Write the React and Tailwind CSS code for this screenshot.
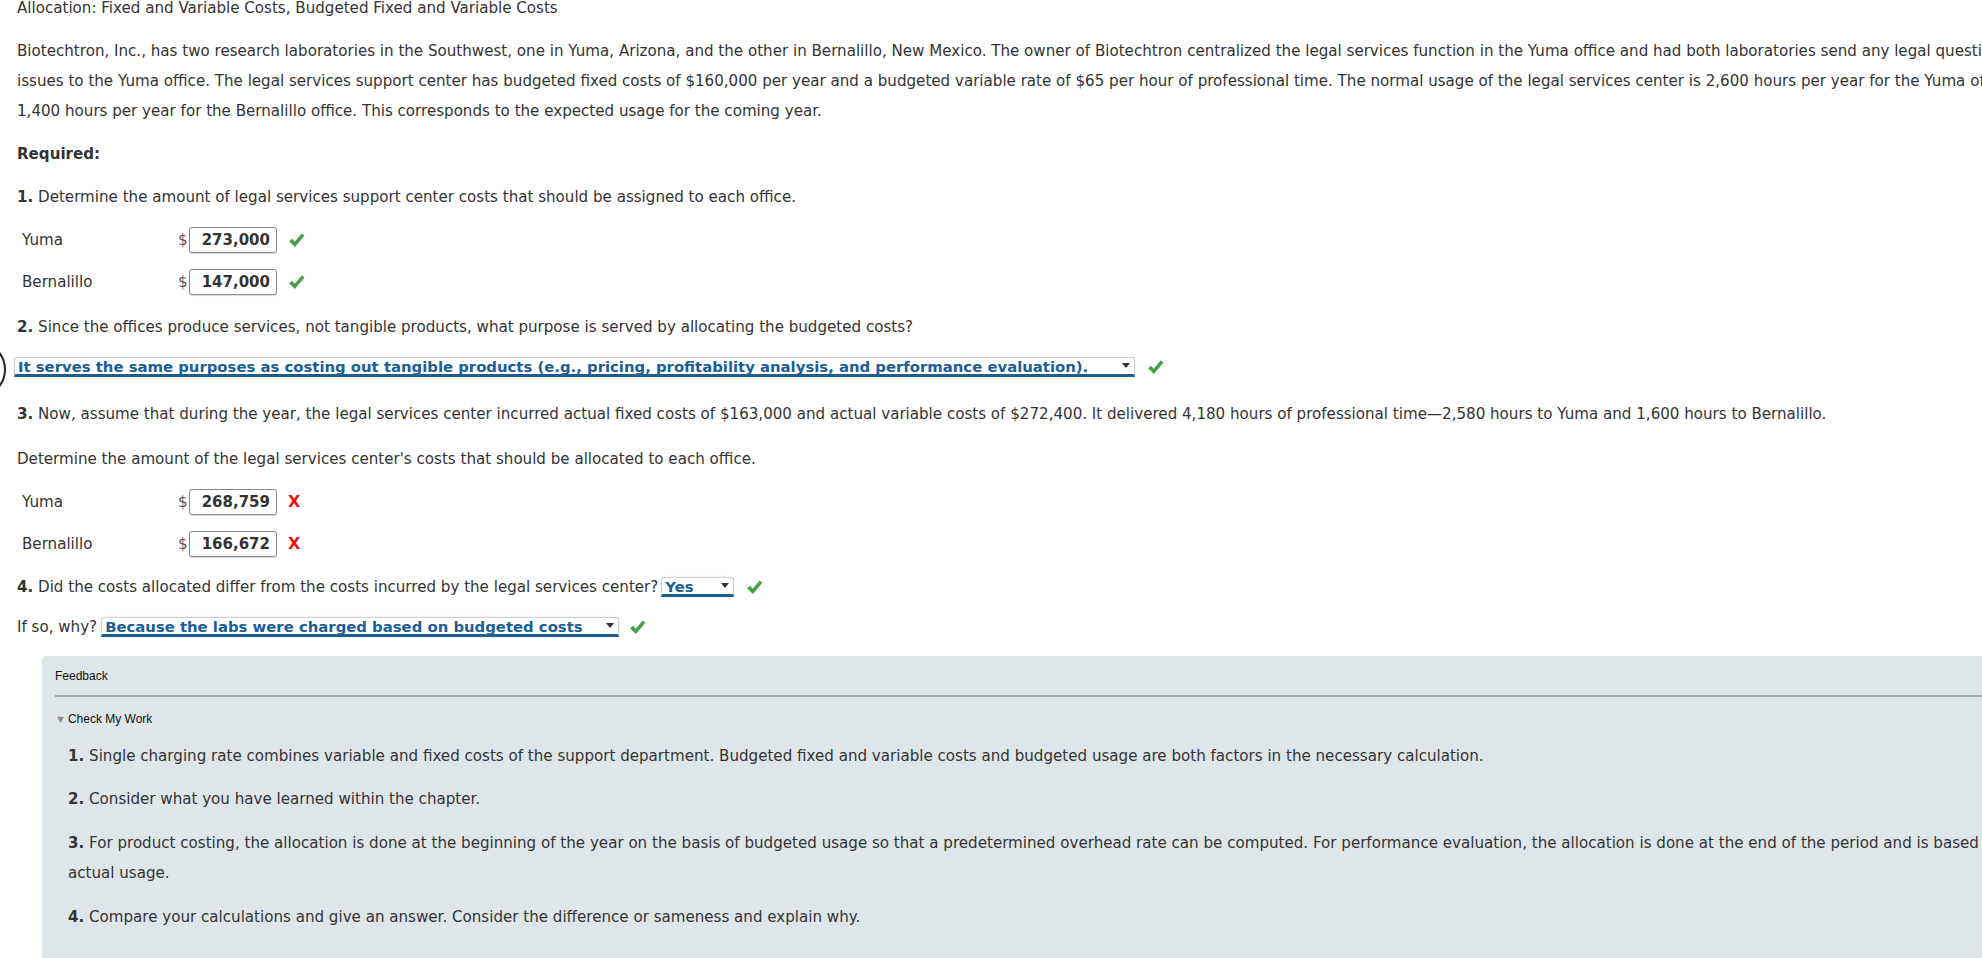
import React from "react";

const body = "font-['DejaVu_Sans',Verdana,sans-serif] text-[15.1px] text-[#333]";

const Check = () => (
  <svg width="17" height="17" viewBox="0 0 16 16" className="shrink-0">
    <path d="M1 8.6 L3.8 6.4 L6.3 9.2 L12.9 1.4 L15.4 3.6 L6.5 14.2 Z" fill="#46a046" />
  </svg>
);

const Cross = () => (
  <span className="font-['DejaVu_Sans',sans-serif] text-[16px] font-bold text-[#ee1111] leading-none">X</span>
);

const Amount = ({ label, value, ok }) => (
  <div className="flex items-center h-[26px] pl-[5px]">
    <span className="w-[156px]">{label}</span>
    <span className="text-[#555] w-[11px]">$</span>
    <div className="w-[88px] h-[26px] rounded-[3px] border border-[#8a8a8a] bg-white shadow-[0_1px_1px_rgba(0,0,0,0.15)] flex items-center justify-end pr-[6px] text-[15px] font-bold text-[#333]">
      {value}
    </div>
    <span className="ml-[11px] flex items-center">{ok ? <Check /> : <Cross />}</span>
  </div>
);

const Select = ({ text, width }) => (
  <div
    className={`relative ${width} h-[20px] bg-white rounded-t-[3px] border border-[#d0d0d0] border-b-[3px] border-b-[#1f5f8f] shadow-[0_0_2px_rgba(0,0,0,0.15)] overflow-hidden`}
  >
    <div className="absolute left-[3px] top-[-1px] whitespace-nowrap text-[14.85px] font-bold text-[#1b5e97] leading-[20px]">
      {text}
    </div>
    <div className="absolute right-[4px] top-[5px] w-0 h-0 border-l-[4px] border-r-[4px] border-t-[5px] border-l-transparent border-r-transparent border-t-[#333]" />
  </div>
);

const Line = ({ children, className = "" }) => (
  <div className={`h-[30px] leading-[30px] whitespace-nowrap ${className}`}>{children}</div>
);

export default function App() {
  return (
    <div className={`relative w-full min-h-[958px] bg-white overflow-hidden ${body}`}>
      {/* focus ring bit at left edge */}
      <div className="absolute left-[-51px] top-[341px] w-[57px] h-[57px] rounded-full border-2 border-[#222]" />

      <div className="pl-[17px] w-[2600px]">
        <div className="h-[16px] leading-[16px] text-[#333]">
          Allocation: Fixed and Variable Costs, Budgeted Fixed and Variable Costs
        </div>

        <div className="mt-[20px]">
          <Line>
            Biotechtron, Inc., has two research laboratories in the Southwest, one in Yuma, Arizona, and the other in Bernalillo, New Mexico. The owner of Biotechtron centralized the legal services function in the Yuma office and had both laboratories send any legal questions and
          </Line>
          <Line>
            issues to the Yuma office. The legal services support center has budgeted fixed costs of $160,000 per year and a budgeted variable rate of $65 per hour of professional time. The normal usage of the legal services center is 2,600 hours per year for the Yuma office and
          </Line>
          <Line>
            1,400 hours per year for the Bernalillo office. This corresponds to the expected usage for the coming year.
          </Line>
        </div>

        <Line className="mt-[13px] font-bold">Required:</Line>

        <Line className="mt-[13px]">
          <b>1.</b> Determine the amount of legal services support center costs that should be assigned to each office.
        </Line>

        <div className="mt-[15px]">
          <Amount label="Yuma" value="273,000" ok />
        </div>
        <div className="mt-[16px]">
          <Amount label="Bernalillo" value="147,000" ok />
        </div>

        <Line className="mt-[17px]">
          <b>2.</b> Since the offices produce services, not tangible products, what purpose is served by allocating the budgeted costs?
        </Line>

        <div className="mt-[14px] h-[22px] flex items-center">
          <div className="-ml-[3px]">
            <Select
              width="w-[1121px]"
              text="It serves the same purposes as costing out tangible products (e.g., pricing, profitability analysis, and performance evaluation)."
            />
          </div>
          <span className="ml-[12px]">
            <Check />
          </span>
        </div>

        <Line className="mt-[21px]">
          <b>3.</b> Now, assume that during the year, the legal services center incurred actual fixed costs of $163,000 and actual variable costs of $272,400. It delivered 4,180 hours of professional time—2,580 hours to Yuma and 1,600 hours to Bernalillo.
        </Line>

        <Line className="mt-[15px]">Determine the amount of the legal services center's costs that should be allocated to each office.</Line>

        <div className="mt-[15px]">
          <Amount label="Yuma" value="268,759" />
        </div>
        <div className="mt-[16px]">
          <Amount label="Bernalillo" value="166,672" />
        </div>

        <div className="mt-[15px] h-[30px] flex items-center whitespace-nowrap">
          <span>
            <b>4.</b> Did the costs allocated differ from the costs incurred by the legal services center?
          </span>
          <span className="ml-[3px]">
            <Select width="w-[73px]" text="Yes" />
          </span>
          <span className="ml-[12px]">
            <Check />
          </span>
        </div>

        <div className="mt-[10px] h-[30px] flex items-center whitespace-nowrap">
          <span>If so, why?</span>
          <span className="ml-[4px]">
            <Select width="w-[518px]" text="Because the labs were charged based on budgeted costs" />
          </span>
          <span className="ml-[10px]">
            <Check />
          </span>
        </div>

        <div className="mt-[14px] ml-[25px] bg-[#dfe6ea] rounded-l-[4px] min-h-[320px] pl-[13px]">
          <div className="h-[41px] flex items-center border-b-2 border-[#a0a4a8] font-['Liberation_Sans',Arial,sans-serif] text-[12px] text-[#111]">
            Feedback
          </div>
          <div className="mt-[12px] h-[20px] flex items-center font-['Liberation_Sans',Arial,sans-serif] text-[12px] text-[#111]">
            <span className="text-[#888] text-[11px] mr-[2px]">▼</span>Check My Work
          </div>
          <div className="pl-[13px]">
            <Line className="mt-[12px]">
              <b>1.</b> Single charging rate combines variable and fixed costs of the support department. Budgeted fixed and variable costs and budgeted usage are both factors in the necessary calculation.
            </Line>
            <Line className="mt-[13px]">
              <b>2.</b> Consider what you have learned within the chapter.
            </Line>
            <div className="mt-[14px]">
              <Line>
                <b>3.</b> For product costing, the allocation is done at the beginning of the year on the basis of budgeted usage so that a predetermined overhead rate can be computed. For performance evaluation, the allocation is done at the end of the period and is based on
              </Line>
              <Line>actual usage.</Line>
            </div>
            <Line className="mt-[14px]">
              <b>4.</b> Compare your calculations and give an answer. Consider the difference or sameness and explain why.
            </Line>
          </div>
        </div>
      </div>
    </div>
  );
}
